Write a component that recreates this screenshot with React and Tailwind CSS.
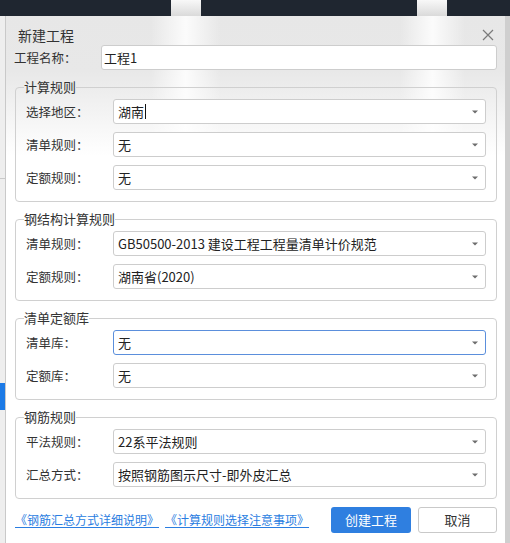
import React from "react";

function Arrow() {
    return (
        <svg width="6" height="4" viewBox="0 0 6 4" className="shrink-0">
            <path d="M0 0.5 H6 L3 3.5 Z" fill="#6d6d6d" />
        </svg>
    );
}

function Select({ value, focused, caret }) {
    return (
        <div
            className={
                "flex-1 h-[25px] flex items-center justify-between bg-white rounded-[3px] border pl-[4px] pr-[7px] " +
                (focused ? "border-[#5b8fdc]" : "border-[#cdcdcd]")
            }
        >
            <span className="flex items-center text-[13px] leading-[18px] text-[#222] whitespace-nowrap">
                {value}
                {caret && <span className="ml-px w-px h-[15px] bg-[#111]" />}
            </span>
            <Arrow />
        </div>
    );
}

function Row({ label, ...rest }) {
    return (
        <div className="flex items-center h-[25px]">
            <div className="w-[87px] text-[12.5px] leading-[18px] text-[#333]">{label}</div>
            <Select {...rest} />
        </div>
    );
}

function Group({ title, children }) {
    return (
        <fieldset className="ml-px border border-[#d0d0d0] rounded-[4px] px-[10px] pt-[3px] pb-[11px]">
            <legend className="ml-[-2px] px-0 text-[13px] leading-[18px] text-[#333]">{title}</legend>
            <div className="flex flex-col gap-[8px]">{children}</div>
        </fieldset>
    );
}

export default function App() {
    return (
        <div className="w-[510px] h-[543px] overflow-hidden flex flex-col bg-[#ececec] font-['Noto_Sans_CJK_SC',sans-serif]">
            {/* background window top bar */}
            <div className="h-[16px] shrink-0 flex bg-[#1f2630]">
                <div className="w-[171px]" />
                <div className="w-[30px] bg-[linear-gradient(180deg,#f8f8f8,#dadada)]" />
                <div className="w-[216px]" />
                <div className="w-[30px] bg-[linear-gradient(180deg,#f8f8f8,#dadada)]" />
            </div>

            <div className="flex flex-1 min-h-0">
                {/* left strip of the window behind */}
                <div className="w-[5px] flex flex-col bg-[#eeeeee]">
                    <div className="h-[162px]" />
                    <div className="h-px bg-[#c9c9c9]" />
                    <div className="h-[204px]" />
                    <div className="h-[27px] bg-[#1c7ae6]" />
                </div>

                {/* dialog */}
                <div className="w-[500px] flex flex-col border-l border-[#c9c9c9] px-[8px] bg-[linear-gradient(90deg,transparent_29%,rgba(255,255,255,0.85)_36%,transparent_43%,transparent_79%,rgba(255,255,255,0.85)_85.5%,transparent_92%),linear-gradient(180deg,#e7e7e7_0px,#e8e8e8_55px,#ffffff_140px)]">
                    <div className="flex items-center justify-between pt-[10px] pl-[4px] pr-[3px]">
                        <span className="text-[14px] leading-[18px] text-[#333]">新建工程</span>
                        <svg width="12" height="12" viewBox="0 0 12 12">
                            <path d="M1 1 L11 11 M11 1 L1 11" stroke="#7a7a7a" strokeWidth="1.2" />
                        </svg>
                    </div>

                    <div className="flex items-center h-[25px] mt-[1px]">
                        <div className="w-[87px] text-[12.5px] leading-[18px] text-[#333]">工程名称：</div>
                        <div className="flex-1 h-[25px] flex items-center bg-white rounded-[3px] border border-[#cdcdcd] px-[2px] text-[13px] text-[#222]">
                            工程1
                        </div>
                    </div>

                    <div className="flex flex-col gap-[8px] mt-[8px]">
                        <Group title="计算规则">
                            <Row label="选择地区：" value="湖南" caret />
                            <Row label="清单规则：" value="无" />
                            <Row label="定额规则：" value="无" />
                        </Group>
                        <Group title="钢结构计算规则">
                            <Row label="清单规则：" value="GB50500-2013 建设工程工程量清单计价规范" />
                            <Row label="定额规则：" value="湖南省(2020)" />
                        </Group>
                        <Group title="清单定额库">
                            <Row label="清单库：" value="无" focused />
                            <Row label="定额库：" value="无" />
                        </Group>
                        <Group title="钢筋规则">
                            <Row label="平法规则：" value="22系平法规则" />
                            <Row label="汇总方式：" value="按照钢筋图示尺寸-即外皮汇总" />
                        </Group>
                    </div>

                    <div className="flex items-center justify-between mt-[8px]">
                        <div className="flex items-center gap-[6px] ml-px text-[12px] leading-[18px] text-[#2a7de1]">
                            <a className="underline underline-offset-2 cursor-pointer">《钢筋汇总方式详细说明》</a>
                            <a className="underline underline-offset-2 cursor-pointer">《计算规则选择注意事项》</a>
                        </div>
                        <div className="flex items-center gap-[7px]">
                            <button className="w-[80px] h-[26px] rounded-[3px] bg-[#2f7fe0] text-white text-[13px]">创建工程</button>
                            <button className="w-[79px] h-[26px] rounded-[3px] bg-white border border-[#c9c9c9] text-[#333] text-[13px]">取消</button>
                        </div>
                    </div>
                </div>

                {/* right strip */}
                <div className="w-[5px] bg-[#cfcfcf]" />
            </div>
        </div>
    );
}
